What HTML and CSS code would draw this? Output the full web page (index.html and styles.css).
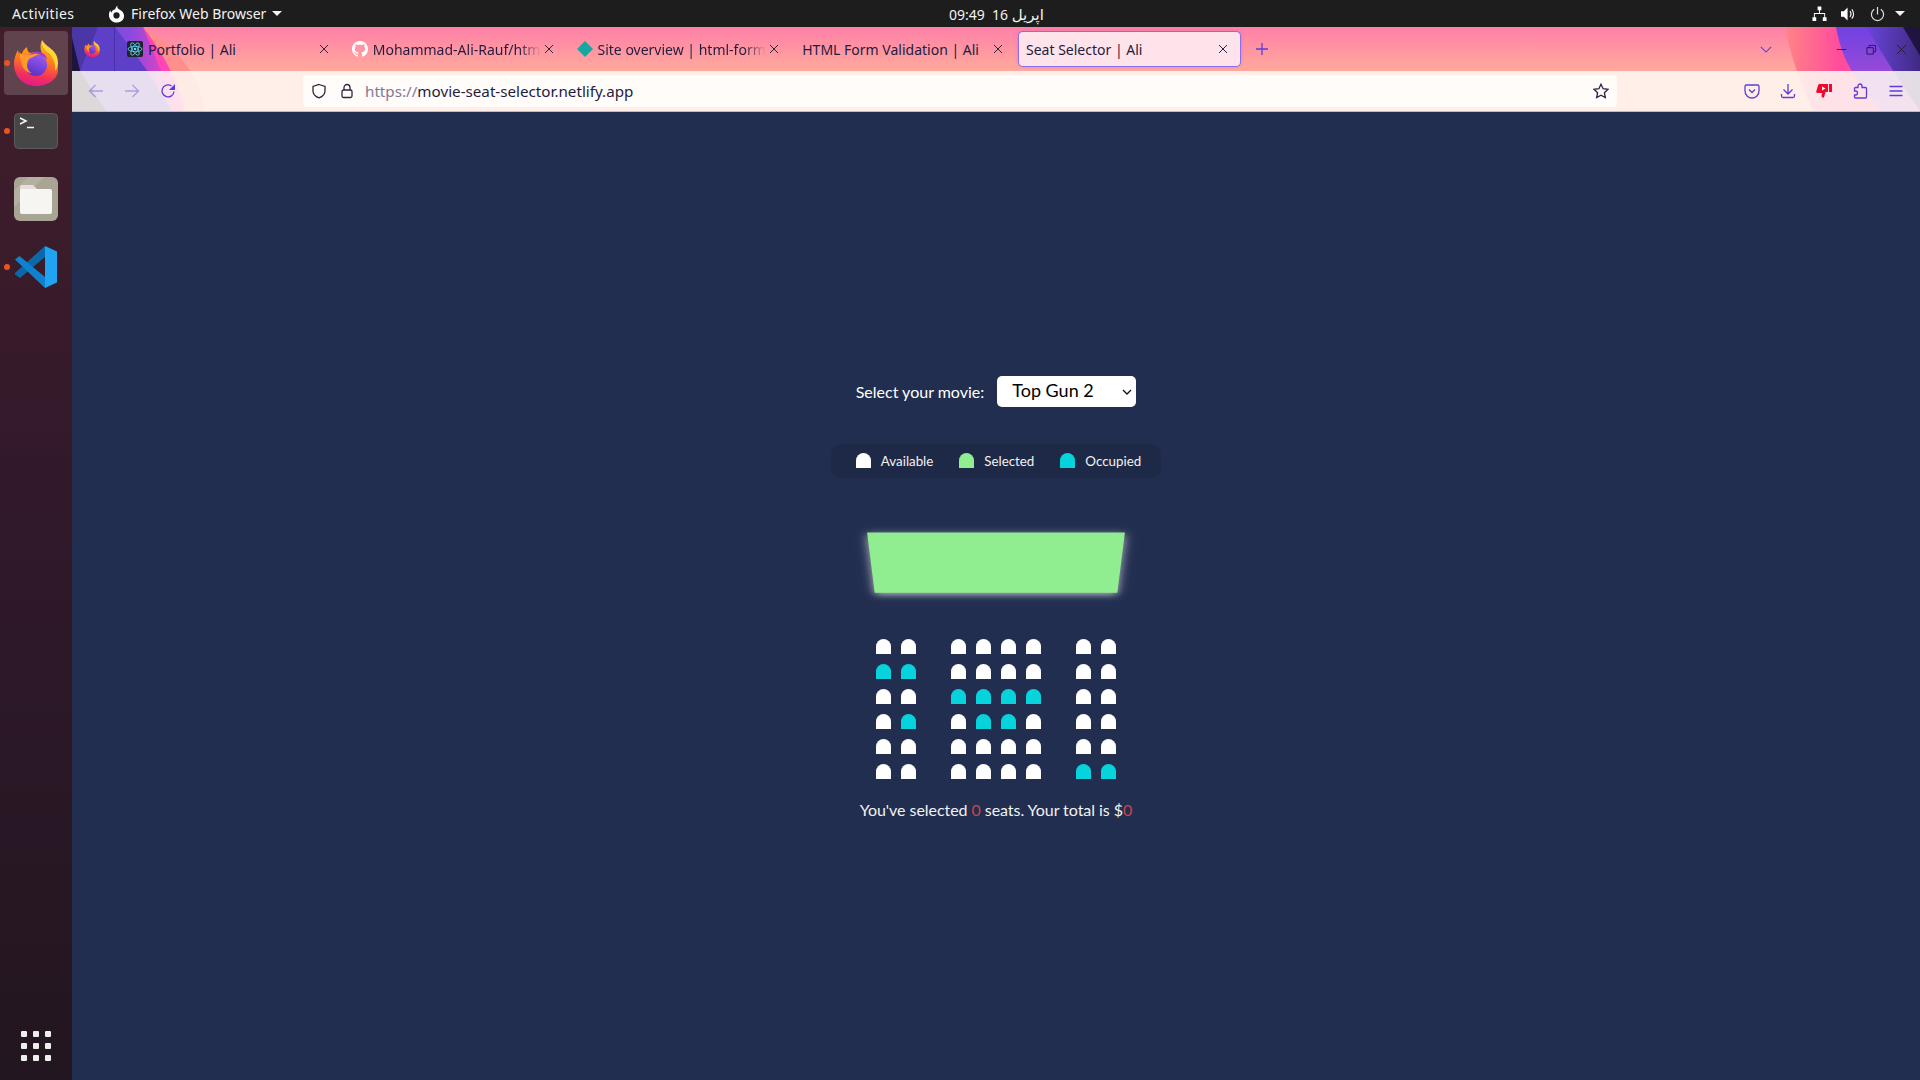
FILE: index.html
```html
<!DOCTYPE html>
<html lang="en">
<head>
<meta charset="utf-8">
<title>Seat Selector | Ali</title>
<link rel="stylesheet" href="styles.css">
</head>
<body>
<svg class="defs" width="0" height="0" aria-hidden="true">
  <defs>
    <linearGradient id="ffBody" x1="0.6" y1="0" x2="0.4" y2="1">
      <stop offset="0" stop-color="#ffc21f"/>
      <stop offset="0.45" stop-color="#ff7a1c"/>
      <stop offset="0.78" stop-color="#f2305c"/>
      <stop offset="1" stop-color="#e3198f"/>
    </linearGradient>
    <linearGradient id="ffGlobe" x1="0.7" y1="0" x2="0.3" y2="1">
      <stop offset="0" stop-color="#9a5cf2"/>
      <stop offset="1" stop-color="#5a2ec4"/>
    </linearGradient>
    <symbol id="firefox" viewBox="0 0 44 46">
      <path fill="url(#ffBody)" d="M28 0c-1 6 1 9 6 13 6 5 10 10 10 17 0 9-10 16-22 16C10 46 0 37 0 24 0 19 1.500 14 4 10c.3 3 1.500 5 3 6 1-4 3-7 6-9 0 3 1 5 3 6 4-1 9-1 12 1-2-5-2-10 0-14z"/>
      <path fill="#ffd535" d="M28 0c-1 6 1 9 6 13 5 4 8 10 7 18 2-2 3-5 3-8 0-8-4-12-8-15-3-2-6-5-8-8z"/>
      <circle cx="22" cy="25" r="11" fill="url(#ffGlobe)"/>
      <path fill="#a23bd8" d="M11 21c2-6 8-10 14-9 5 .8 8 4 8 8-3-4-8-6-12-5-4 1-7 3-10 6z"/>
      <path fill="#ff9a2a" d="M5 12c3 3 6 3.500 10 3 4-.7 7-2 11-.5-3 0-5 1.500-8 3-2.500 1-4 2.500-4.500 5 -1.500 5 1 9 5 11-6-1-10-5-11-10-.6-4-1.500-7-2.500-11.500z"/>
    </symbol>
  </defs>
</svg>

<div class="desktop">
  <header class="topbar">
    <div class="top-left">
      <span class="top-activities">Activities</span>
      <span class="top-app">
        <svg class="top-ff" viewBox="0 0 18 18"><path fill="#fff" d="M10 0c-.5 2 .2 3 1.500 4C14.500 5.500 17 7.500 17 11c0 4-3.500 7-8 7s-8-3.500-8-8c0-2 .6-3.500 1.500-5 .1 1 .6 2 1.200 2.300C4.500 5 6 4 7.500 4.200 8 2.500 9 1 10 0z"/><circle cx="9" cy="10.500" r="3.300" fill="#1d1d1d"/></svg>
        Firefox Web Browser
        <span class="caret"></span>
      </span>
    </div>
    <div class="top-clock">09:49&nbsp; 16 <span class="clock-month">اپریل</span></div>
    <div class="top-right">
      <svg class="top-ico" viewBox="0 0 16 16"><path fill="#fff" d="M6 0h4v4H8.500v3H14v4.500h1.500v4h-4v-4H13V8H3v3.500h1.500v4h-4v-4H2V7h5.500V4H6z"/></svg>
      <svg class="top-ico" viewBox="0 0 16 16"><path fill="#fff" d="M0 5h3l4-4v14l-4-4H0z"/><path fill="none" stroke="#fff" stroke-width="1.200" d="M9.500 5c1.300 1.700 1.300 4.300 0 6M11.500 3c2.500 2.800 2.500 7.200 0 10"/></svg>
      <svg class="top-ico" viewBox="0 0 16 16"><path fill="none" stroke="#ddd" stroke-width="1.300" d="M8 .5v8M4.500 3a6.500 6.500 0 1 0 7 0"/></svg>
      <span class="caret caret-right"></span>
    </div>
  </header>

  <div class="workspace">
    <nav class="dock">
      <div class="dock-item dock-active">
        <span class="dot"></span>
        <svg class="dock-ff"><use href="#firefox"/></svg>
      </div>
      <div class="dock-item">
        <span class="dot"></span>
        <svg class="dock-term" viewBox="0 0 44 36">
          <rect x=".5" y=".5" width="43" height="35" rx="4" fill="#464646" stroke="#5c5c5c"/>
          <path fill="none" stroke="#f4f4f4" stroke-width="1.600" d="M6 5l6 3-6 3M13 14.500h7"/>
        </svg>
      </div>
      <div class="dock-item">
        <svg class="dock-files" viewBox="0 0 44 44">
          <rect width="44" height="44" rx="6" fill="#a9a594"/>
          <path fill="#b5b1a2" d="M14 0h16L0 30V14z"/>
          <path fill="#e3e1da" d="M6 10a2 2 0 0 1 2-2h11l4 4v6H6z"/>
          <rect x="6" y="12" width="32" height="25" rx="2" fill="#f6f5f1"/>
        </svg>
      </div>
      <div class="dock-item">
        <span class="dot"></span>
        <svg class="dock-code" viewBox="0 0 42 42">
          <path fill="#0b69ab" d="M30 0v11L5 32 0 28.500V27z"/>
          <path fill="#0f82cf" d="M0 13.500 4.500 10 30 31v11z"/>
          <path fill="#1fa3f2" d="M30 0l12 5.500v31L30 42z"/>
        </svg>
      </div>
      <div class="dock-grid">
        <span></span><span></span><span></span>
        <span></span><span></span><span></span>
        <span></span><span></span><span></span>
      </div>
    </nav>

    <div class="window">
      <div class="chrome">
        <svg class="theme" viewBox="72 27 1848 85" preserveAspectRatio="none" aria-hidden="true">
          <defs>
            <linearGradient id="thPurple" x1="0" x2="1" y1="0" y2="0">
              <stop offset="0" stop-color="#6a45dc"/>
              <stop offset="0.55" stop-color="#8a4ae0"/>
              <stop offset="1" stop-color="#ff40b4"/>
            </linearGradient>
            <linearGradient id="thPink" x1="0" x2="1" y1="0" y2="0">
              <stop offset="0" stop-color="#ff8486"/>
              <stop offset="0.4" stop-color="#ff4d9c"/>
              <stop offset="1" stop-color="#ff4d9c"/>
            </linearGradient>
            <linearGradient id="thViolet" x1="0" x2="0" y1="0" y2="1">
              <stop offset="0" stop-color="#7042e2"/>
              <stop offset="1" stop-color="#b650d0"/>
            </linearGradient>
            <linearGradient id="thDeep" x1="0" x2="1" y1="0" y2="0">
              <stop offset="0" stop-color="#6a45dc"/>
              <stop offset="1" stop-color="#3f2a82"/>
            </linearGradient>
          </defs>
          <path fill="#ff8f8c" d="M72 27H143C170 42 200 72 205 112H72Z"/>
          <path fill="#ff46b4" d="M72 27H143C160 50 178 78 184 112H72Z"/>
          <path fill="url(#thPurple)" d="M72 27H143L161 71 178 112H72Z"/>
          <path fill="#5d3fc8" d="M72 27H115L147 71 172 112H72Z"/>
          <path fill="#40308f" d="M72 27H98L80 71H72Z" opacity=".6"/>
          <path fill="#1d1440" d="M72 38 80 71 106 112H72Z"/>
          <path fill="url(#thPink)" d="M1785 27C1790 52 1798 80 1813 112H1920V27Z"/>
          <path fill="url(#thViolet)" d="M1836 27C1840 50 1848 68 1858 80L1880 112H1920V27Z"/>
          <path fill="url(#thDeep)" d="M1866 27 1893 71 1920 112V27Z"/>
          <path fill="#1f1440" d="M1903 27 1920 56V27Z"/>
        </svg>

        <div class="tabbar">
          <div class="home-tab"><svg class="favicon"><use href="#firefox"/></svg></div>
          <div class="tabs">
            <div class="tab">
              <svg class="favicon" viewBox="0 0 16 16">
                <rect width="16" height="16" rx="2" fill="#20232a"/>
                <g fill="none" stroke="#61dafb" stroke-width=".8">
                  <ellipse cx="8" cy="8" rx="7" ry="2.700"/>
                  <ellipse cx="8" cy="8" rx="7" ry="2.700" transform="rotate(60 8 8)"/>
                  <ellipse cx="8" cy="8" rx="7" ry="2.700" transform="rotate(120 8 8)"/>
                </g>
                <circle cx="8" cy="8" r="1.300" fill="#61dafb"/>
              </svg>
              <span class="tab-title">Portfolio | Ali</span>
              <svg class="tab-x" viewBox="0 0 16 16"><path d="M4 4l8 8M12 4l-8 8"/></svg>
            </div>
            <div class="tab">
              <svg class="favicon" viewBox="0 0 16 16"><path fill="#fff" d="M8 0C3.580 0 0 3.580 0 8c0 3.540 2.290 6.530 5.470 7.590.4.070.55-.17.55-.38 0-.19-.01-.82-.01-1.490-2.010.37-2.530-.49-2.690-.94-.09-.23-.48-.94-.82-1.130-.28-.15-.68-.52-.01-.53.63-.01 1.080.58 1.230.82.72 1.210 1.870.87 2.330.66.07-.52.28-.87.51-1.070-1.780-.2-3.640-.89-3.640-3.950 0-.87.31-1.590.82-2.150-.08-.2-.36-1.020.08-2.120 0 0 .67-.21 2.200.82.64-.18 1.320-.27 2-.27.68 0 1.360.09 2 .27 1.530-1.040 2.200-.82 2.200-.82.44 1.100.16 1.920.08 2.120.51.56.82 1.270.82 2.150 0 3.070-1.870 3.750-3.650 3.950.29.25.54.73.54 1.480 0 1.070-.01 1.930-.01 2.200 0 .21.15.46.55.38A8.013 8.013 0 0 0 16 8c0-4.420-3.580-8-8-8z"/></svg>
              <span class="tab-title tab-fade">Mohammad-Ali-Rauf/htm</span>
              <svg class="tab-x" viewBox="0 0 16 16"><path d="M4 4l8 8M12 4l-8 8"/></svg>
            </div>
            <div class="tab">
              <svg class="favicon" viewBox="0 0 16 16"><path fill="#14a8a0" d="M8 0l8 8-8 8-8-8z"/></svg>
              <span class="tab-title tab-fade">Site overview | html-form</span>
              <svg class="tab-x" viewBox="0 0 16 16"><path d="M4 4l8 8M12 4l-8 8"/></svg>
            </div>
            <div class="tab">
              <span class="tab-title tab-nofav">HTML Form Validation | Ali</span>
              <svg class="tab-x" viewBox="0 0 16 16"><path d="M4 4l8 8M12 4l-8 8"/></svg>
            </div>
            <div class="tab tab-active">
              <span class="tab-title">Seat Selector | Ali</span>
              <svg class="tab-x" viewBox="0 0 16 16"><path d="M4 4l8 8M12 4l-8 8"/></svg>
            </div>
          </div>
          <svg class="tab-plus" viewBox="0 0 16 16"><path d="M8 2v12M2 8h12"/></svg>
          <div class="tabbar-right">
            <svg class="tab-all" viewBox="0 0 14 8"><path d="M1 1l6 6 6-6"/></svg>
            <div class="winctl">
              <svg viewBox="0 0 12 12"><path d="M1 6h10"/></svg>
              <svg viewBox="0 0 12 12"><path d="M1 4h7v7H1zM3.500 4V1.500h7v7H8"/></svg>
              <svg viewBox="0 0 12 12"><path d="M1 1l10 10M11 1L1 11"/></svg>
            </div>
          </div>
        </div>

        <div class="toolbar">
          <div class="nav-btns">
            <svg class="tb tb-faded" viewBox="0 0 16 16"><path d="M15 8H1.500M7.500 2l-6 6 6 6"/></svg>
            <svg class="tb tb-faded" viewBox="0 0 16 16"><path d="M1 8h13.500M8.500 2l6 6-6 6"/></svg>
            <svg class="tb" viewBox="0 0 16 16"><path d="M14 8.500A6 6 0 1 1 11.500 3"/><path class="tb-fill" d="M15 1v6H9z"/></svg>
          </div>
          <div class="urlbar">
            <svg class="url-ico" viewBox="0 0 16 16"><path d="M8 1.500l6 2v4.500c0 3.500-3 5.800-6 6.800-3-1-6-3.300-6-6.800V3.500z"/></svg>
            <svg class="url-ico url-lock" viewBox="0 0 16 16"><rect x="3" y="7" width="10" height="7.500" rx="1.500"/><path d="M5 7V4.500a3 3 0 0 1 6 0V7"/></svg>
            <span class="url-text"><span class="url-scheme">https://</span>movie-seat-selector.netlify.app</span>
            <svg class="url-ico url-star" viewBox="0 0 16 16"><path d="M8 1.200l2.100 4.500 4.900.6-3.600 3.400.9 4.900L8 12.200l-4.300 2.400.9-4.900L1 6.300l4.900-.6z"/></svg>
          </div>
          <div class="tools">
            <svg class="tb" viewBox="0 0 16 16"><path d="M2.500 2h11A1.500 1.500 0 0 1 15 3.500V8A7 7 0 0 1 1 8V3.500A1.500 1.500 0 0 1 2.500 2z"/><path d="M5 6.500l3 3 3-3"/></svg>
            <svg class="tb" viewBox="0 0 16 16"><path d="M8 1v10M3.500 6.500L8 11l4.500-4.500M1.500 11v2a1.500 1.500 0 0 0 1.500 1.500h10a1.500 1.500 0 0 0 1.500-1.500v-2"/></svg>
            <svg class="tb-red" viewBox="0 0 16 16"><path fill="#f5062c" d="M4 1h8v8H9.500L8 14.500c-1.500.5-2.500-.5-2.500-1.500L6 10H1.500C.5 10 0 9.200.3 8.300L2 2.500C2.300 1.500 3 1 4 1z"/><path fill="#f5062c" d="M13 1h3v8h-3z"/><path fill="#fff" d="M6 3.500l3.500 2L6 7.500z"/></svg>
            <svg class="tb" viewBox="0 0 16 16"><path d="M6 3.500V3a2 2 0 0 1 4 0v1.500h3.500a1 1 0 0 1 1 1V14a1 1 0 0 1-1 1H3.500a1 1 0 0 1-1-1v-2h1a2 2 0 0 0 0-4h-1V5.500a1 1 0 0 1 1-1H6z"/></svg>
            <svg class="tb" viewBox="0 0 16 16"><path d="M1.500 3.500h13M1.500 8h13M1.500 12.500h13"/></svg>
          </div>
        </div>
      </div>

      <main class="page">
        <div class="movie-row">
          <label class="movie-label" for="movie">Select your movie:</label>
          <div class="select-wrap">
            <select class="movie-select" id="movie">
              <option>Top Gun 2</option>
            </select>
            <svg class="select-arrow" viewBox="0 0 10 6"><path d="M1 1l4 4 4-4"/></svg>
          </div>
        </div>

        <ul class="legend">
          <li class="legend-item"><span class="seat seat-free"></span><small class="legend-text">Available</small></li>
          <li class="legend-item"><span class="seat seat-picked"></span><small class="legend-text">Selected</small></li>
          <li class="legend-item"><span class="seat seat-taken"></span><small class="legend-text">Occupied</small></li>
        </ul>

        <div class="screen"></div>

        <div class="hall">
          <div class="row"><span class="seat seat-free"></span><span class="seat seat-free aisle"></span><span class="seat seat-free"></span><span class="seat seat-free"></span><span class="seat seat-free"></span><span class="seat seat-free aisle"></span><span class="seat seat-free"></span><span class="seat seat-free"></span></div>
          <div class="row"><span class="seat seat-taken"></span><span class="seat seat-taken aisle"></span><span class="seat seat-free"></span><span class="seat seat-free"></span><span class="seat seat-free"></span><span class="seat seat-free aisle"></span><span class="seat seat-free"></span><span class="seat seat-free"></span></div>
          <div class="row"><span class="seat seat-free"></span><span class="seat seat-free aisle"></span><span class="seat seat-taken"></span><span class="seat seat-taken"></span><span class="seat seat-taken"></span><span class="seat seat-taken aisle"></span><span class="seat seat-free"></span><span class="seat seat-free"></span></div>
          <div class="row"><span class="seat seat-free"></span><span class="seat seat-taken aisle"></span><span class="seat seat-free"></span><span class="seat seat-taken"></span><span class="seat seat-taken"></span><span class="seat seat-free aisle"></span><span class="seat seat-free"></span><span class="seat seat-free"></span></div>
          <div class="row"><span class="seat seat-free"></span><span class="seat seat-free aisle"></span><span class="seat seat-free"></span><span class="seat seat-free"></span><span class="seat seat-free"></span><span class="seat seat-free aisle"></span><span class="seat seat-free"></span><span class="seat seat-free"></span></div>
          <div class="row"><span class="seat seat-free"></span><span class="seat seat-free aisle"></span><span class="seat seat-free"></span><span class="seat seat-free"></span><span class="seat seat-free"></span><span class="seat seat-free aisle"></span><span class="seat seat-taken"></span><span class="seat seat-taken"></span></div>
        </div>

        <p class="summary">You've selected <span class="count">0</span> seats. Your total is $<span class="count">0</span></p>
      </main>
    </div>
  </div>
</div>
</body>
</html>
```

FILE: styles.css
```css
* { box-sizing: border-box; }

html, body {
  margin: 0;
  height: 100%;
  overflow: hidden;
}

.defs { position: absolute; }

.desktop {
  display: grid;
  grid-template-rows: 27px 1fr;
  height: 1080px;
  width: 1920px;
  font-family: "Noto Sans", "DejaVu Sans", sans-serif;
}

/* GNOME top bar */
.topbar {
  display: grid;
  grid-template-columns: 949px auto 1fr;
  align-items: center;
  background: #1d1d1d;
  color: #f2f2f2;
  font-size: 14px;
}

.top-left {
  display: flex;
  align-items: center;
  padding-left: 12px;
}

.top-activities {
  width: 96px;
  letter-spacing: 0.4px;
}

.top-app {
  display: flex;
  align-items: center;
  gap: 6px;
}

.top-ff { width: 17px; height: 18px; }

.caret {
  width: 0;
  height: 0;
  margin-left: 0;
  border: 5px solid transparent;
  border-top: 5px solid #f2f2f2;
  border-bottom: 0;
}

.caret-right { margin-left: -4px; }

.top-clock { font-size: 14px; }
.clock-month { font-size: 15px; }

.top-right {
  display: flex;
  justify-content: flex-end;
  align-items: center;
  gap: 14px;
  padding-right: 15px;
}

.top-ico { width: 15px; height: 16px; }

/* Ubuntu dock */
.workspace {
  display: grid;
  grid-template-columns: 72px 1fr;
  min-height: 0;
}

.dock {
  position: relative;
  display: flex;
  flex-direction: column;
  align-items: center;
  padding-top: 4px;
  background: linear-gradient(180deg, #421e2b 0%, #31192a 45%, #221620 100%);
}

.dock-item {
  position: relative;
  display: flex;
  align-items: center;
  justify-content: center;
  width: 64px;
  height: 64px;
  margin-bottom: 4px;
}

.dock-active {
  background: rgba(255, 255, 255, 0.17);
  border-radius: 4px;
}

.dot {
  position: absolute;
  left: 0;
  top: 29px;
  width: 6px;
  height: 6px;
  border-radius: 50%;
  background: #e95420;
}

.dock-ff { width: 44px; height: 46px; }
.dock-term { width: 44px; height: 36px; }
.dock-files { width: 44px; height: 44px; }
.dock-code { width: 42px; height: 42px; }

.dock-grid {
  display: grid;
  grid-template-columns: repeat(3, 6px);
  gap: 6px;
  margin-top: auto;
  margin-bottom: 19px;
}

.dock-grid span {
  width: 6px;
  height: 6px;
  border-radius: 1px;
  background: #eeeeec;
}

/* Firefox window */
.window {
  display: flex;
  flex-direction: column;
  min-width: 0;
}

.chrome {
  position: relative;
  height: 85px;
  background: linear-gradient(180deg, #ff80a8 0, #ffaa9c 44px);
  border-bottom: 1px solid #d9b49c;
  color: #241c3f;
}

.theme {
  position: absolute;
  inset: 0;
  width: 100%;
  height: 100%;
}

.tabbar {
  position: relative;
  display: flex;
  align-items: center;
  height: 44px;
  font-size: 14px;
}

.home-tab {
  display: flex;
  align-items: center;
  justify-content: center;
  width: 43px;
  height: 44px;
  padding-right: 3px;
  border-right: 1px solid #4a2fa8;
}

.favicon {
  flex: none;
  width: 16px;
  height: 16px;
}

.tabs {
  display: flex;
  margin-left: 5px;
}

.tab {
  display: flex;
  align-items: center;
  width: 221px;
  height: 34px;
  margin-right: 3.750px;
  padding: 0 9px 0 7px;
  border-radius: 4px;
}

.tab-title {
  flex: 1;
  min-width: 0;
  margin-left: 5px;
  white-space: nowrap;
}

.tab-fade {
  -webkit-mask-image: linear-gradient(90deg, #000 calc(100% - 22px), transparent);
  mask-image: linear-gradient(90deg, #000 calc(100% - 22px), transparent);
}

.tab-nofav { margin-left: 1px; }

.tab-active {
  background: #ffe3ea;
  box-shadow: 0 0 0 1px #8a6cf5, 0 0 4px rgba(90, 50, 200, 0.3);
}

.tab-active .tab-title { margin-left: 0; }

.tab-x {
  flex: none;
  width: 16px;
  height: 16px;
  fill: none;
  stroke: #2b2544;
  stroke-width: 1;
}

.tab-plus {
  flex: none;
  width: 16px;
  height: 16px;
  margin-left: 10px;
  fill: none;
  stroke: #5b3fd6;
  stroke-width: 1.300;
}

.tabbar-right {
  display: flex;
  align-items: center;
  margin-left: auto;
}

.tab-all {
  width: 12px;
  height: 7px;
  margin-right: 64px;
  fill: none;
  stroke: #5b3fd6;
  stroke-width: 1.300;
}

.winctl {
  display: flex;
  gap: 19px;
  padding-right: 13px;
}

.winctl svg {
  width: 11px;
  height: 11px;
  fill: none;
  stroke: #241a3c;
  stroke-width: 1;
}

.toolbar {
  position: relative;
  display: flex;
  align-items: center;
  height: 40px;
  background: rgba(255, 252, 246, 0.85);
}

.nav-btns {
  display: flex;
  gap: 20px;
  width: 231px;
  padding-left: 16px;
}

.tb {
  flex: none;
  width: 16px;
  height: 16px;
  fill: none;
  stroke: #5b3fd6;
  stroke-width: 1.300;
}

.tb-fill { fill: #5b3fd6; stroke: none; }
.tb-faded { opacity: 0.42; }
.tb-red { flex: none; width: 16px; height: 16px; }

.urlbar {
  display: flex;
  align-items: center;
  width: 1314px;
  height: 32px;
  padding-left: 8px;
  padding-right: 8px;
  background: #fffcf9;
  border-radius: 4px;
  font-size: 15.200px;
}

.url-ico {
  flex: none;
  width: 16px;
  height: 16px;
  fill: none;
  stroke: #2b2544;
  stroke-width: 1.300;
}

.url-lock { margin-left: 12px; }

.url-text {
  flex: 1;
  margin-left: 10px;
  white-space: nowrap;
}

.url-scheme { color: #7f7a92; }

.tools {
  display: flex;
  align-items: center;
  gap: 20px;
  margin-left: 127px;
}

/* The seat selector page */
.page {
  flex: 1;
  display: flex;
  flex-direction: column;
  align-items: center;
  justify-content: center;
  padding-top: 2px;
  background: #222e50;
  color: #fff;
  font-family: Lato, sans-serif;
  font-size: 16px;
}

.movie-row {
  display: flex;
  align-items: center;
  gap: 13px;
  height: 31px;
  margin-bottom: 37px;
}

.select-wrap { position: relative; }

.movie-select {
  display: block;
  width: 139px;
  height: 31px;
  padding: 0 15px 2px;
  border: 0;
  border-radius: 5px;
  background: #fff;
  color: #000;
  font-family: Lato, sans-serif;
  font-size: 18px;
  appearance: none;
  -webkit-appearance: none;
}

.select-arrow {
  position: absolute;
  right: 4px;
  top: 13px;
  width: 10px;
  height: 6px;
  fill: none;
  stroke: #111;
  stroke-width: 1.300;
  pointer-events: none;
}

.legend {
  display: flex;
  align-items: center;
  height: 34px;
  margin: 0;
  padding: 0 9px;
  list-style: none;
  background: rgba(0, 0, 0, 0.1);
  border-radius: 10px;
  font-size: 13.330px;
}

.legend-item {
  display: flex;
  align-items: center;
  margin: 0 10.500px;
}

.legend-text {
  margin-left: 5px;
  font-size: 13.330px;
  color: #f2f2f2;
}

.seat {
  flex: none;
  width: 15px;
  height: 15px;
  margin: 5px;
  border-radius: 10px 10px 0 0;
}

.seat-free { background: #fff; }
.seat-picked { background: #90ee90; }
.seat-taken { background: #07d3dc; }
.aisle { margin-right: 30px; }

.screen {
  width: 250px;
  height: 85px;
  margin: 43.500px 0 27.500px;
  background: #90ee90;
  transform: perspective(1000px) rotateX(-45deg);
  box-shadow: 0 3px 10px rgba(255, 255, 255, 0.7);
}

.hall {
  display: flex;
  flex-direction: column;
}

.row { display: flex; }

.summary {
  margin: 16px 0 0;
  line-height: 19px;
  color: #f2f2f2;
  letter-spacing: -0.05px;
}

.count { color: #c8444f; }
```
